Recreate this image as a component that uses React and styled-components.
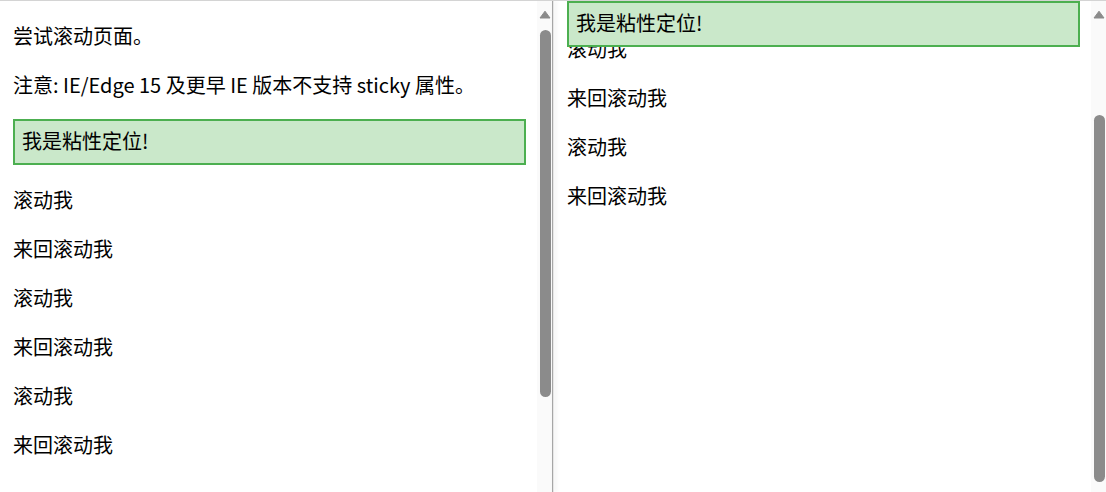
import React, { useLayoutEffect, useRef } from 'react';
import styled, { createGlobalStyle } from 'styled-components';

const Global = createGlobalStyle`
  html, body {
    margin: 0;
    padding: 0;
    overflow: hidden;
    background: #ffffff;
  }
  body {
    font-family: "Noto Sans CJK SC", "Noto Sans", sans-serif;
    color: #000000;
  }
`;

const Stage = styled.div`
  display: flex;
  width: 1106px;
  height: 492px;
  overflow: hidden;
  box-sizing: border-box;
  border-top: 1px solid #d4d4d4;
`;

const Pane = styled.div`
  flex: none;
  width: 552px;
  height: 100%;
  display: flex;
  background: #ffffff;
`;

const ScrollArea = styled.div`
  flex: 1;
  min-width: 0;
  height: 100%;
  overflow-y: scroll;
  overflow-x: hidden;
  scrollbar-width: none;
  &::-webkit-scrollbar {
    display: none;
  }
`;

const ScrollBar = styled.div`
  flex: none;
  width: 15px;
  height: 100%;
  display: flex;
  flex-direction: column;
  background: #fafafa;
`;

const ArrowButton = styled.div`
  flex: none;
  height: 29px;
  display: flex;
  justify-content: center;
  padding-top: 9px;
  box-sizing: border-box;
  padding-left: 1px;
`;

const Track = styled.div`
  flex: 1;
  display: flex;
  flex-direction: column;
  align-items: center;
  padding-left: 1px;
`;

const Thumb = styled.div`
  flex: none;
  width: 11px;
  height: 367px;
  border-radius: 6px;
  background: #8b8b8b;
`;

const Divider = styled.div`
  flex: none;
  width: 2px;
  height: 100%;
  background: linear-gradient(to right, #a6a6a6 0 1px, #e6e6e6 1px 2px);
  box-shadow: 2px 0 4px rgba(0, 0, 0, 0.09);
  position: relative;
  z-index: 2;
`;

const Page = styled.div`
  padding: 0 11px 8px 13px;
  font-size: 20px;
`;

const Para = styled.p`
  margin: 20px 0;
  line-height: 29px;
`;

const Sticky = styled.div`
  position: sticky;
  top: 0;
  padding: 5px 7px 8px;
  line-height: 29px;
  background-color: #cae8ca;
  border: 2px solid #4caf50;
  z-index: 1;
`;

const Scroller = styled.div`
  padding-bottom: 2000px;
`;

const items = ['滚动我', '来回滚动我', '滚动我', '来回滚动我', '滚动我', '来回滚动我'];

function Demo() {
  return (
    <Page>
      <Para>尝试滚动页面。</Para>
      <Para>注意: IE/Edge 15 及更早 IE 版本不支持 sticky 属性。</Para>
      <Sticky>我是粘性定位!</Sticky>
      <Scroller>
        {items.map((t, i) => (
          <Para key={i}>{t}</Para>
        ))}
      </Scroller>
    </Page>
  );
}

function FakeScrollBar({ offset }) {
  return (
    <ScrollBar>
      <ArrowButton>
        <svg width="12" height="9" viewBox="0 0 12 9">
          <path d="M6 1.2 L11 8 L1 8 Z" fill="#8b8b8b" stroke="#8b8b8b" strokeWidth="1" strokeLinejoin="round" />
        </svg>
      </ArrowButton>
      <Track>
        <Thumb style={{ marginTop: offset }} />
      </Track>
    </ScrollBar>
  );
}

function Frame({ scrollTop, thumbOffset }) {
  const ref = useRef(null);
  useLayoutEffect(() => {
    if (ref.current) ref.current.scrollTop = scrollTop;
  }, [scrollTop]);
  return (
    <Pane>
      <ScrollArea ref={ref}>
        <Demo />
      </ScrollArea>
      <FakeScrollBar offset={thumbOffset} />
    </Pane>
  );
}

export default function App() {
  return (
    <>
      <Global />
      <Stage>
        <Frame scrollTop={0} thumbOffset={0} />
        <Divider />
        <Frame scrollTop={249} thumbOffset={85} />
      </Stage>
    </>
  );
}
